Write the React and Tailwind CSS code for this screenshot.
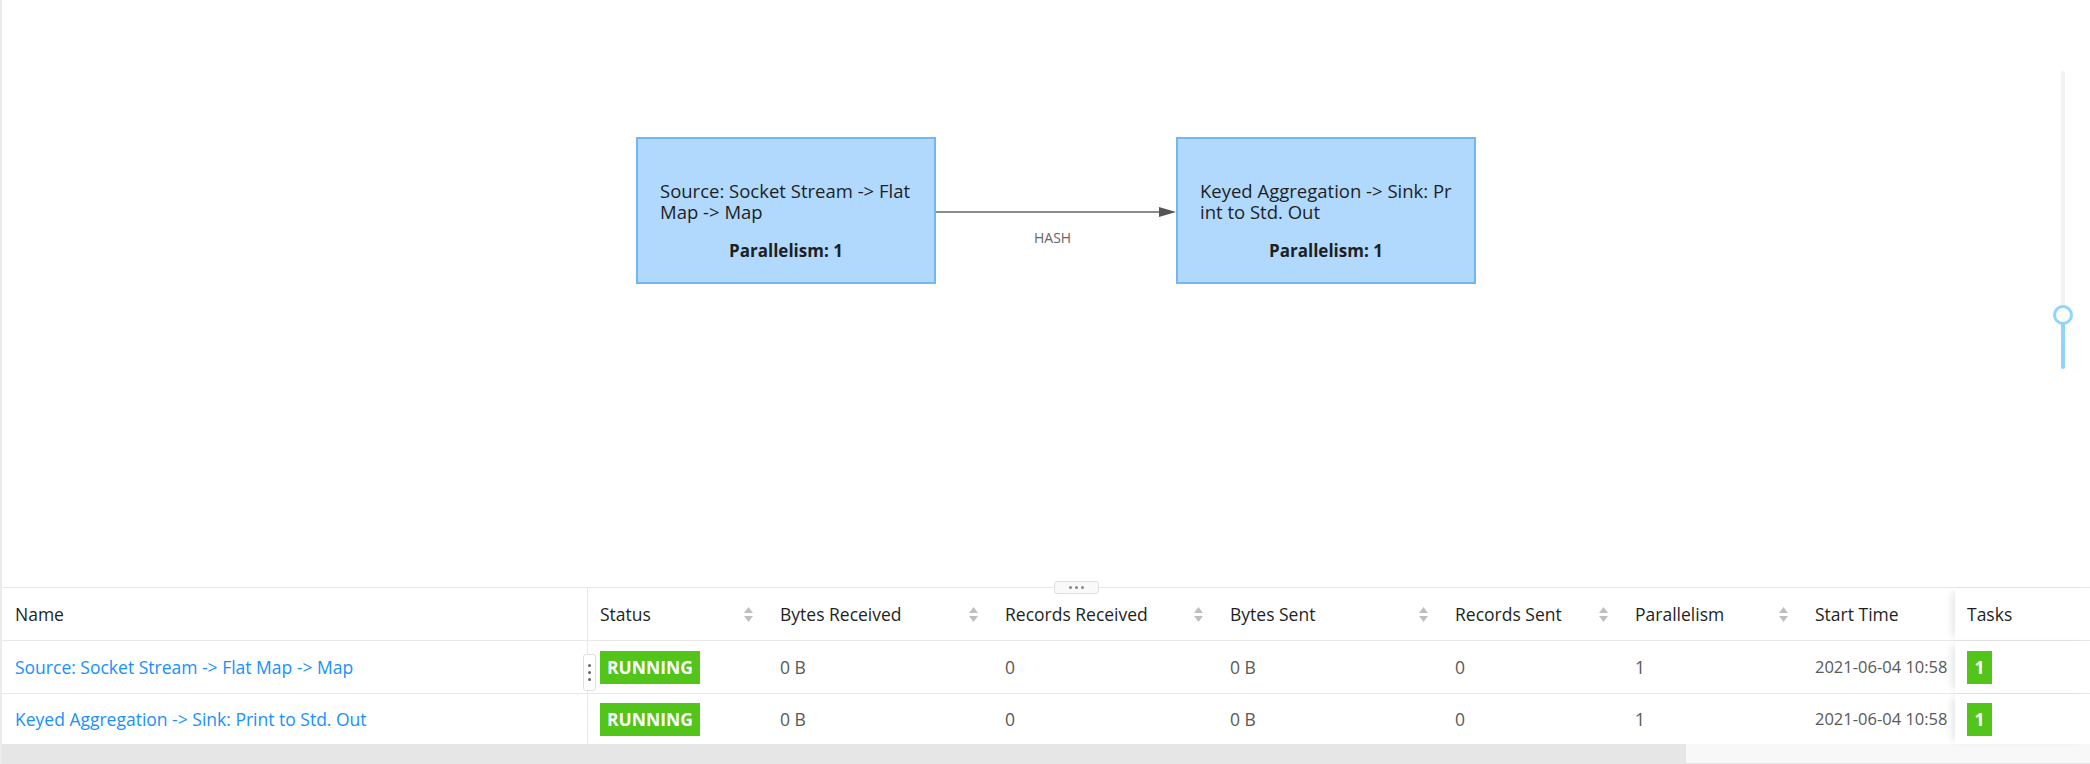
import React from "react";

const font = { fontFamily: '"Open Sans", "Noto Sans", sans-serif' };

const columns = [
  { key: "status", label: "Status", w: "w-[180px]" },
  { key: "br", label: "Bytes Received", w: "w-[225px]" },
  { key: "rr", label: "Records Received", w: "w-[225px]" },
  { key: "bs", label: "Bytes Sent", w: "w-[225px]" },
  { key: "rs", label: "Records Sent", w: "w-[180px]" },
  { key: "p", label: "Parallelism", w: "w-[180px]" },
];

const rows = [
  { name: "Source: Socket Stream -> Flat Map -> Map", br: "0 B", rr: "0", bs: "0 B", rs: "0", p: "1", start: "2021-06-04 10:58", tasks: "1" },
  { name: "Keyed Aggregation -> Sink: Print to Std. Out", br: "0 B", rr: "0", bs: "0 B", rs: "0", p: "1", start: "2021-06-04 10:58", tasks: "1" },
];

function SortIcon() {
  return (
    <svg width="11" height="17" viewBox="0 0 11 17" className="shrink-0">
      <path d="M5.5 1 L10 7 L1 7 Z" fill="#bfbfbf" />
      <path d="M1 10 L10 10 L5.5 16 Z" fill="#bfbfbf" />
    </svg>
  );
}

function Node({ left, lines }) {
  return (
    <div
      className="absolute top-[137px] w-[300px] h-[147px] bg-[#b0d9fd] border-2 border-[#72b6f6] pt-[41px] px-[22px] text-[18.5px] leading-[21px] text-[#1f1f1f]"
      style={{ left }}
    >
      {lines.map((l) => (
        <div key={l} className="whitespace-nowrap">{l}</div>
      ))}
      <div className="mt-[18px] text-center font-bold text-[17px]">Parallelism: 1</div>
    </div>
  );
}

function Tag({ children, w }) {
  return (
    <span className={`inline-flex items-center justify-center h-[33px] ${w} bg-[#52c41a] text-white font-bold text-[17.5px]`}>
      {children}
    </span>
  );
}

export default function App() {
  return (
    <div className="w-[2090px] h-[764px] overflow-hidden bg-white border-l-2 border-[#ebebeb]" style={font}>
      {/* graph canvas */}
      <div className="relative h-[587px]">
        <svg className="absolute inset-0" width="2088" height="587">
          <line x1="932" y1="212" x2="1160" y2="212" stroke="#8c8c8c" strokeWidth="2" />
          <path d="M1157 207 L1174 212 L1157 217 Z" fill="#555" />
        </svg>
        <Node left="634px" lines={["Source: Socket Stream -> Flat", "Map -> Map"]} />
        <Node left="1174px" lines={["Keyed Aggregation -> Sink: Pr", "int to Std. Out"]} />
        <div className="absolute left-[1032px] top-[227px] text-[14px] text-[#666]">HASH</div>

        {/* zoom slider */}
        <div className="absolute left-[2059px] top-[71px] w-[4px] h-[298px] rounded-full bg-[#f2f2f2]">
          <div className="absolute left-0 bottom-0 w-[4px] h-[54px] rounded-full bg-[#91d5ff]" />
          <div className="absolute left-[-8px] top-[234px] w-[20px] h-[20px] rounded-full bg-white border-[3px] border-[#91d5ff]" />
        </div>
      </div>

      {/* table panel */}
      <div className="relative border-t border-[#e8e8e8]">
        <div className="absolute left-[1052px] top-[-7px] w-[45px] h-[13px] rounded-[3px] bg-[#f9f9f9] border border-[#e0e0e0] flex items-center justify-center gap-[3px] z-10">
          <span className="w-[3px] h-[3px] rounded-full bg-[#888]" />
          <span className="w-[3px] h-[3px] rounded-full bg-[#888]" />
          <span className="w-[3px] h-[3px] rounded-full bg-[#888]" />
        </div>
        <div className="absolute left-[581px] top-[66px] w-[13px] h-[37px] rounded-[3px] bg-white border border-[#e0e0e0] flex flex-col items-center justify-center gap-[4px] z-10">
          <span className="w-[3px] h-[3px] rounded-full bg-[#666]" />
          <span className="w-[3px] h-[3px] rounded-full bg-[#666]" />
          <span className="w-[3px] h-[3px] rounded-full bg-[#666]" />
        </div>

        {/* header */}
        <div className="flex h-[53px] border-b border-[#e8e8e8] text-[17.5px] text-[#1f1f1f]">
          <div className="w-[586px] shrink-0 border-r border-[#e8e8e8] flex items-center pl-[13px]">Name</div>
          {columns.map((c) => (
            <div key={c.key} className={`${c.w} shrink-0 flex items-center justify-between pl-[12px] pr-[14px]`}>
              <span>{c.label}</span>
              <SortIcon />
            </div>
          ))}
          <div className="w-[152px] shrink-0 flex items-center pl-[12px]">Start Time</div>
          <div className="w-[135px] shrink-0 flex items-center pl-[12px] bg-white shadow-[-6px_0_8px_-4px_rgba(0,0,0,0.12)]">Tasks</div>
        </div>

        {/* body */}
        {rows.map((r, i) => (
          <div key={r.name} className={`flex text-[17.5px] text-[#595959] ${i === 0 ? "h-[53px] border-b border-[#e8e8e8]" : "h-[50px]"}`}>
            <div className="w-[586px] shrink-0 border-r border-[#e8e8e8] flex items-center pl-[13px] text-[#1890ff]">{r.name}</div>
            <div className="w-[180px] shrink-0 flex items-center pl-[12px]">
              <Tag w="w-[100px]">RUNNING</Tag>
            </div>
            <div className="w-[225px] shrink-0 flex items-center pl-[12px]">{r.br}</div>
            <div className="w-[225px] shrink-0 flex items-center pl-[12px]">{r.rr}</div>
            <div className="w-[225px] shrink-0 flex items-center pl-[12px]">{r.bs}</div>
            <div className="w-[180px] shrink-0 flex items-center pl-[12px]">{r.rs}</div>
            <div className="w-[180px] shrink-0 flex items-center pl-[12px]">{r.p}</div>
            <div className="w-[152px] shrink-0 flex items-center pl-[12px] text-[16.5px] overflow-hidden whitespace-nowrap">{r.start}</div>
            <div className="w-[135px] shrink-0 flex items-center pl-[12px] bg-white shadow-[-6px_0_8px_-4px_rgba(0,0,0,0.12)]">
              <Tag w="w-[25px]">{r.tasks}</Tag>
            </div>
          </div>
        ))}

        {/* horizontal scrollbar */}
        <div className="flex h-[20px] bg-[#f8f8f8] border-b border-[#e6e6e6]">
          <div className="w-[1684px] h-full bg-[#e6e6e6]" />
        </div>
      </div>
    </div>
  );
}
